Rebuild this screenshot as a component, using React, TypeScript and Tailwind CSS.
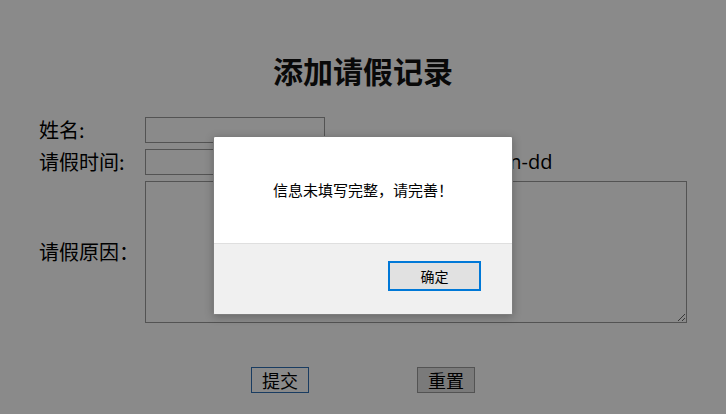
import { useState } from "react";

const cjk = "font-['Microsoft_YaHei','Noto_Sans_CJK_SC',sans-serif]";

export default function App() {
  const [name, setName] = useState("");
  const [date, setDate] = useState("");
  const [reason, setReason] = useState("");
  const [showAlert, setShowAlert] = useState(true);

  return (
    <div className={`relative min-h-[414px] bg-white text-black ${cjk}`}>
      <h1 className="pt-[48px] text-center text-[30px] leading-[44px] font-bold text-[#111]">添加请假记录</h1>

      <form
        onSubmit={(e) => {
          e.preventDefault();
          if (!name || !date || !reason) setShowAlert(true);
        }}
        className="mt-[25px]"
      >
        <div className="ml-[39px] grid grid-cols-[106px_auto] items-center gap-y-[6px] text-[20px] leading-[26px]">
          <label htmlFor="name">姓名:</label>
          <input
            id="name"
            value={name}
            onChange={(e) => setName(e.target.value)}
            className="h-[26px] w-[180px] border border-[#9a9a9a] bg-white px-1 text-[16px] outline-none"
          />
          <label htmlFor="date">请假时间:</label>
          <div className="flex items-center">
            <input
              id="date"
              value={date}
              onChange={(e) => setDate(e.target.value)}
              className="h-[26px] w-[180px] border border-[#9a9a9a] bg-white px-1 text-[16px] outline-none"
            />
            <span className="ml-[113px] font-['Segoe_UI','Open_Sans',sans-serif] text-[20px]">yyyy-mm-dd</span>
          </div>
          <label htmlFor="reason">请假原因：</label>
          <textarea
            id="reason"
            value={reason}
            onChange={(e) => setReason(e.target.value)}
            className="block h-[142px] w-[542px] resize border border-[#9a9a9a] bg-white outline-none"
          />
        </div>

        <div className="mt-[44px] flex justify-center gap-[108px] text-[18px]">
          <button type="submit" className="h-[26px] w-[58px] border border-[#2f6fb3] bg-[#ffffff] leading-[24px]">
            提交
          </button>
          <button
            type="reset"
            onClick={() => {
              setName("");
              setDate("");
              setReason("");
            }}
            className="h-[26px] w-[58px] border border-[#9a9a9a] bg-[#e1e1e1] leading-[24px]"
          >
            重置
          </button>
        </div>
      </form>

      {showAlert && (
        <div className="absolute inset-0 bg-black/[0.46]">
          <div className="mx-auto mt-[136px] w-[300px] overflow-hidden rounded-[2px] border border-[#7d7d7d] bg-white shadow-[0_2px_8px_rgba(0,0,0,0.25)]">
            <div className="flex h-[106px] items-center justify-center text-[15px]">信息未填写完整，请完善！</div>
            <div className="flex h-[71px] justify-end border-t border-[#dfdfdf] bg-[#f0f0f0] pt-[17px] pr-[31px]">
              <button
                onClick={() => setShowAlert(false)}
                className="h-[30px] w-[93px] border-2 border-[#0078d7] bg-[#e1e1e1] text-[14px] leading-[26px]"
              >
                确定
              </button>
            </div>
          </div>
        </div>
      )}
    </div>
  );
}
